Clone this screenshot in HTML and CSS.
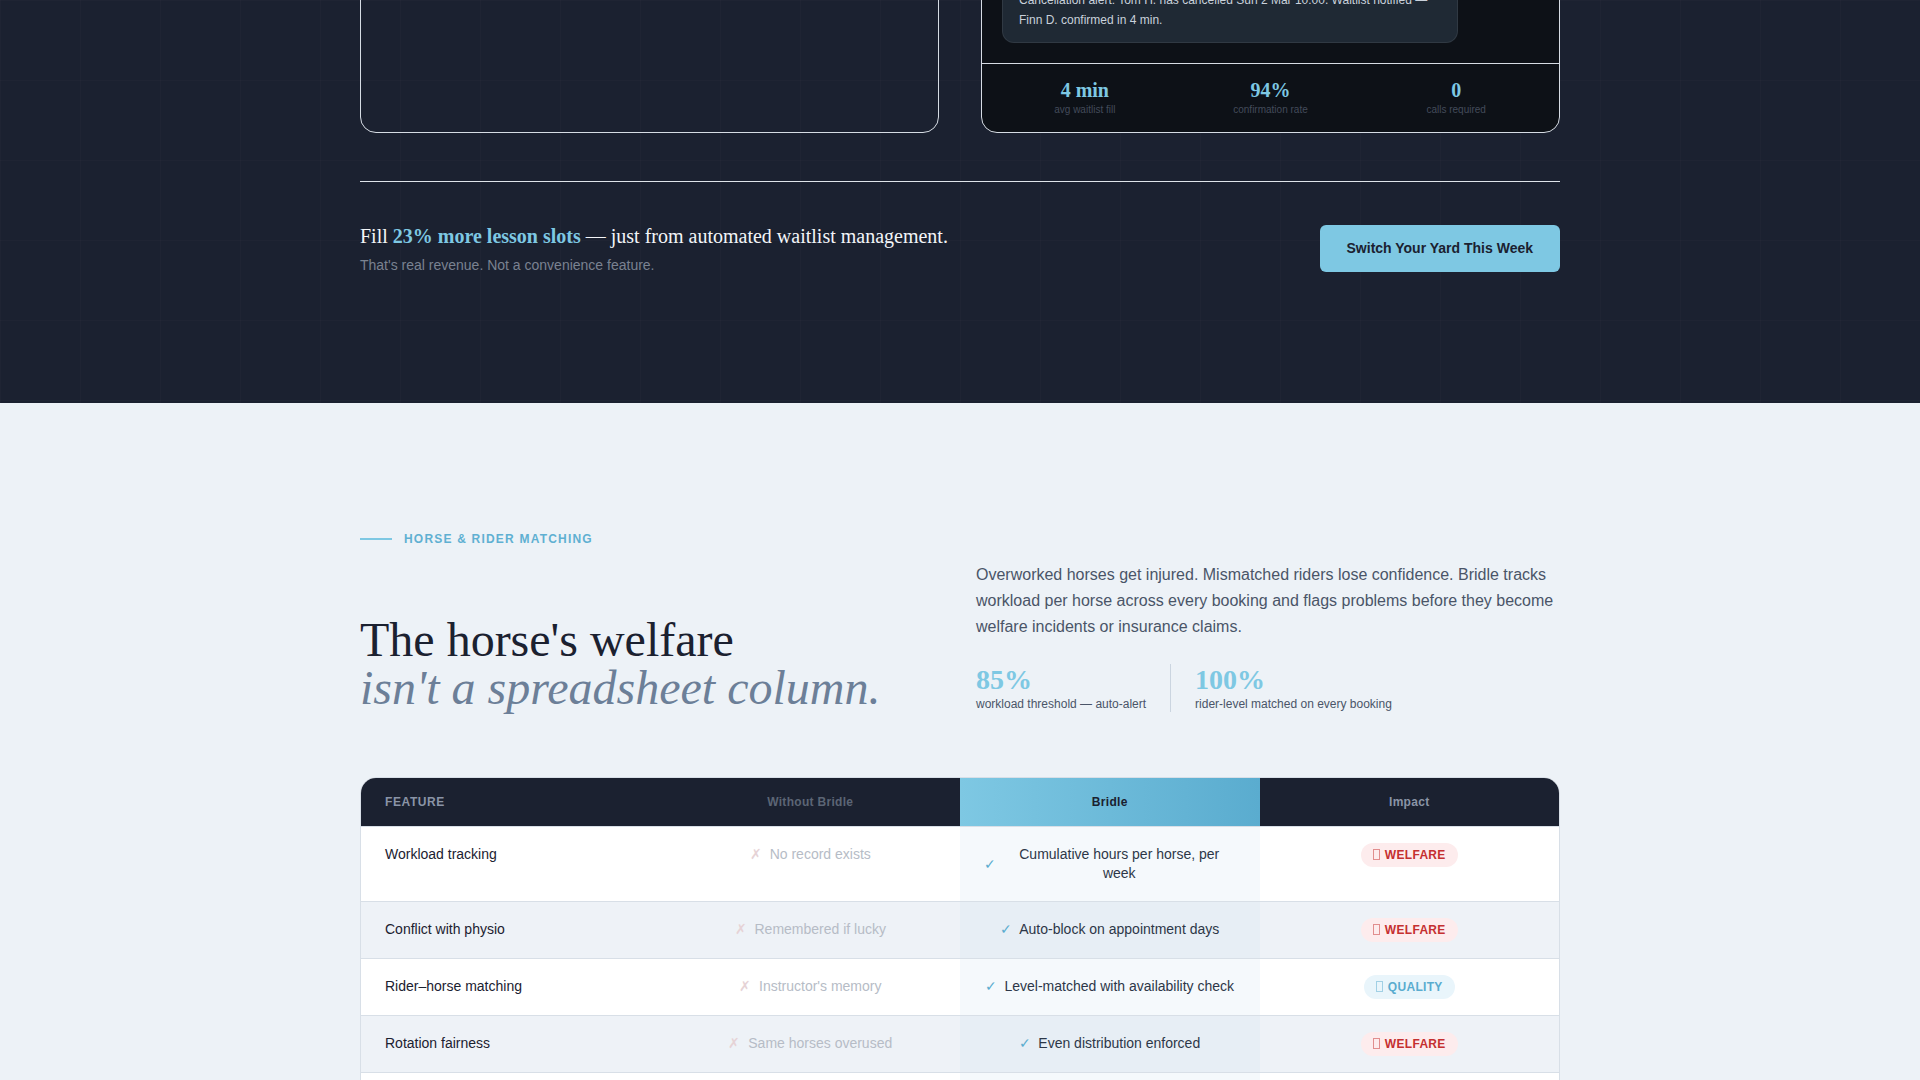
FILE: index.html
```html
<!DOCTYPE html>
<html lang="en">
<head>
<title>Bridle — Yard Management</title>
<meta charset="utf-8">
<link rel="stylesheet" href="styles.css">
</head>
<body>

<section class="dark">
<div class="wrap">
  <div class="cards">
    <div class="card card-plain"></div>
    <div class="card card-feed">
      <div class="feed">
        <div class="alert">Cancellation alert: Tom H. has cancelled Sun 2 Mar 10:00. Waitlist notified — Finn D. confirmed in 4 min.</div>
      </div>
      <div class="feed-stats">
        <div class="feed-stat">
          <div class="feed-num">4 min</div>
          <div class="feed-label">avg waitlist fill</div>
        </div>
        <div class="feed-stat">
          <div class="feed-num">94%</div>
          <div class="feed-label">confirmation rate</div>
        </div>
        <div class="feed-stat">
          <div class="feed-num">0</div>
          <div class="feed-label">calls required</div>
        </div>
      </div>
    </div>
  </div>

  <hr class="rule">

  <div class="cta">
    <div>
      <h3 class="cta-title">Fill <strong>23% more lesson slots</strong> — just from automated waitlist management.</h3>
      <p class="cta-sub">That's real revenue. Not a convenience feature.</p>
    </div>
    <a class="btn" href="#">Switch Your Yard This Week</a>
  </div>
</div>
</section>

<section class="light">
<div class="wrap">
  <div class="intro">
    <div>
      <div class="eyebrow"><span class="eyebrow-line"></span>Horse &amp; Rider Matching</div>
      <h2 class="headline">The horse's welfare<br><em>isn't a spreadsheet column.</em></h2>
    </div>
    <div>
      <p class="lead">Overworked horses get injured. Mismatched riders lose confidence. Bridle tracks workload per horse across every booking and flags problems before they become welfare incidents or insurance claims.</p>
      <div class="stats">
        <div class="stat">
          <div class="stat-num">85%</div>
          <div class="stat-label">workload threshold — auto-alert</div>
        </div>
        <div class="stat">
          <div class="stat-num">100%</div>
          <div class="stat-label">rider-level matched on every booking</div>
        </div>
      </div>
    </div>
  </div>

  <table class="compare">
    <thead>
      <tr>
        <th class="col-feature">Feature</th>
        <th class="col-without">Without Bridle</th>
        <th class="col-bridle">Bridle</th>
        <th class="col-impact">Impact</th>
      </tr>
    </thead>
    <tbody>
      <tr>
        <td class="col-feature">Workload tracking</td>
        <td class="col-without"><span class="cross">✗</span>No record exists</td>
        <td class="col-bridle"><div class="yes"><span class="tick">✓</span><span>Cumulative hours per horse, per week</span></div></td>
        <td class="col-impact"><span class="badge badge-welfare"><span class="glyph"></span>WELFARE</span></td>
      </tr>
      <tr>
        <td class="col-feature">Conflict with physio</td>
        <td class="col-without"><span class="cross">✗</span>Remembered if lucky</td>
        <td class="col-bridle"><div class="yes"><span class="tick">✓</span><span>Auto-block on appointment days</span></div></td>
        <td class="col-impact"><span class="badge badge-welfare"><span class="glyph"></span>WELFARE</span></td>
      </tr>
      <tr>
        <td class="col-feature">Rider–horse matching</td>
        <td class="col-without"><span class="cross">✗</span>Instructor's memory</td>
        <td class="col-bridle"><div class="yes"><span class="tick">✓</span><span>Level-matched with availability check</span></div></td>
        <td class="col-impact"><span class="badge badge-quality"><span class="glyph"></span>QUALITY</span></td>
      </tr>
      <tr>
        <td class="col-feature">Rotation fairness</td>
        <td class="col-without"><span class="cross">✗</span>Same horses overused</td>
        <td class="col-bridle"><div class="yes"><span class="tick">✓</span><span>Even distribution enforced</span></div></td>
        <td class="col-impact"><span class="badge badge-welfare"><span class="glyph"></span>WELFARE</span></td>
      </tr>
      <tr>
        <td class="col-feature">Farrier &amp; vet history</td>
        <td class="col-without"><span class="cross">✗</span>Paper notebook</td>
        <td class="col-bridle"><div class="yes"><span class="tick">✓</span><span>Logged per horse, searchable</span></div></td>
        <td class="col-impact"><span class="badge badge-quality"><span class="glyph"></span>QUALITY</span></td>
      </tr>
    </tbody>
  </table>
</div>
</section>

</body>
</html>
```

FILE: styles.css
```css
body {
margin: 0;
font-family: "Liberation Sans", Arial, sans-serif;
font-size: 14px;
color: #1b2130;
background: #edf2f7;
}
.wrap {
width: 1200px;
margin: 0 auto;
}

/* dark band with faint grid */
.dark {
background-color: #1b2130;
background-image:
  linear-gradient(rgba(255,255,255,0.014) 1px, transparent 1px),
  linear-gradient(90deg, rgba(255,255,255,0.014) 1px, transparent 1px);
background-size: 80px 80px;
padding-bottom: 128px;
overflow: hidden;
}
.cards {
display: grid;
grid-template-columns: 1fr 1fr;
gap: 42px;
margin-top: -227px;
}
.card {
border: 1px solid #d6dce4;
border-radius: 16px;
min-height: 358px;
}
.card-feed {
background: #0d1117;
display: flex;
flex-direction: column;
overflow: hidden;
}
.feed {
flex: 1;
display: flex;
flex-direction: column;
justify-content: flex-end;
padding: 20px;
}
.alert {
box-sizing: border-box;
max-width: 85%;
padding: 12px 16px;
background: #1f2934;
border: 1px solid rgba(255,255,255,0.08);
border-radius: 12px;
color: #c9d1db;
font-size: 12px;
line-height: 20px;
}
.feed-stats {
display: grid;
grid-template-columns: repeat(3, 1fr);
border-top: 1px solid #d6dce4;
padding: 14px 10px 15px;
text-align: center;
}
.feed-num {
font-family: "Liberation Serif", "Times New Roman", serif;
font-weight: bold;
font-size: 20px;
line-height: 24px;
color: #7ec8e3;
}
.feed-label {
margin-top: 1px;
font-size: 10px;
line-height: 14px;
color: #434b5a;
}

.rule {
border: 0;
height: 1px;
background: #dfe4ea;
margin: 48px 0 0;
}
.cta {
display: flex;
justify-content: space-between;
align-items: center;
padding-top: 40px;
}
.cta-title {
margin: 0;
font-family: "Liberation Serif", "Times New Roman", serif;
font-weight: normal;
font-size: 20px;
line-height: 28px;
color: #f3f5f8;
}
.cta-title strong {
color: #7ec8e3;
}
.cta-sub {
margin: 5px 0 0;
font-size: 14px;
line-height: 20px;
color: #7a8290;
}
.btn {
display: inline-block;
padding: 14px 27px;
background: #7ec8e3;
color: #1b2130;
font-weight: bold;
font-size: 14px;
line-height: 19px;
border-radius: 6px;
text-decoration: none;
}

/* light section */
.light {
padding: 128px 0 80px;
}
.intro {
display: grid;
grid-template-columns: 1fr 1fr;
gap: 32px;
align-items: end;
}
.eyebrow {
display: flex;
align-items: center;
gap: 12px;
font-size: 12px;
line-height: 16px;
font-weight: bold;
letter-spacing: 1.2px;
text-transform: uppercase;
color: #5fb0d2;
margin-bottom: 69px;
}
.eyebrow-line {
width: 32px;
height: 2px;
background: #7ec8e3;
}
.headline {
margin: 0;
font-family: "Liberation Serif", "Times New Roman", serif;
font-weight: normal;
font-size: 48px;
line-height: 48px;
color: #1b2130;
}
.headline em {
color: #6c7f98;
}
.lead {
margin: 0;
font-size: 16px;
line-height: 26px;
color: #4a5568;
}
.stats {
display: flex;
margin-top: 24px;
}
.stat {
padding-right: 24px;
}
.stat + .stat {
padding-left: 24px;
border-left: 1px solid #cbd5e0;
}
.stat-num {
font-family: "Liberation Serif", "Times New Roman", serif;
font-weight: bold;
font-size: 28px;
line-height: 32px;
color: #7ec8e3;
}
.stat-label {
font-size: 12px;
line-height: 16px;
color: #4a5568;
}

/* comparison table */
.compare {
width: 100%;
margin-top: 65px;
table-layout: fixed;
border-collapse: separate;
border-spacing: 0;
border: 1px solid #d8dfe7;
border-radius: 16px;
overflow: hidden;
background: #fff;
}
.compare th {
background: #1b2130;
padding: 16px 24px;
font-size: 12px;
line-height: 16px;
font-weight: bold;
letter-spacing: 0.3px;
color: #8a94a6;
text-align: center;
}
.compare th.col-feature {
text-align: left;
text-transform: uppercase;
letter-spacing: 0.6px;
}
.compare th.col-without {
color: #5c6575;
}
.compare th.col-bridle {
background: linear-gradient(90deg, #7ec8e3, #5aaccf);
color: #1b2130;
}
.compare td {
padding: 18px 24px;
line-height: 19px;
vertical-align: top;
text-align: center;
border-top: 1px solid #d8dfe7;
color: #2d3748;
}
.compare td.col-feature {
text-align: left;
color: #1b2130;
}
.compare td.col-without {
color: #b6bcc6;
}
.compare td.col-bridle {
background: #f5f9fc;
}
.compare td.col-impact {
padding: 16px 24px;
}
.compare tbody tr:nth-child(even) td {
background: #eef2f7;
}
.compare tbody tr:nth-child(even) td.col-bridle {
background: #e7eef5;
}
.cross {
color: #e6d3d6;
margin-right: 8px;
}
.yes {
display: flex;
align-items: center;
justify-content: center;
gap: 7px;
}
.tick {
flex: none;
width: 12px;
color: #5aaccf;
}
.badge {
display: inline-block;
padding: 4px 12px;
border-radius: 12px;
font-size: 12px;
line-height: 16px;
font-weight: bold;
letter-spacing: 0.3px;
}
.badge-welfare {
color: #c53030;
background: #fdeced;
}
.badge-quality {
color: #5aaccf;
background: #e9f5fb;
}
.glyph {
display: inline-block;
width: 5px;
height: 9px;
border: 1px solid currentColor;
margin-right: 5px;
vertical-align: -1px;
opacity: 0.5;
}
```
